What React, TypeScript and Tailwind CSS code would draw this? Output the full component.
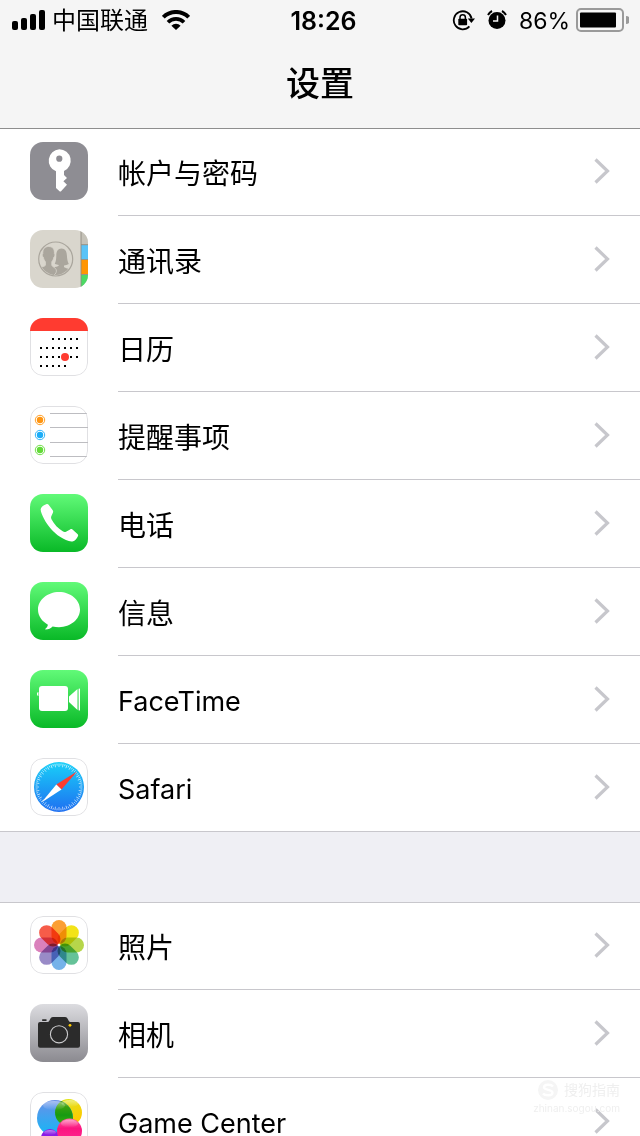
import type { ReactNode } from "react";

function Tile({ children, outlined = false }: { children: ReactNode; outlined?: boolean }) {
  return (
    <span className="relative block size-[58px] shrink-0 overflow-hidden rounded-[13px] bg-white">
      <svg viewBox="0 0 58 58" className="block size-full" aria-hidden="true">
        {outlined && (
          <rect x="0.5" y="0.5" width="57" height="57" rx="12.5" fill="none" stroke="#e0e0e3" />
        )}
        {children}
      </svg>
    </span>
  );
}

function KeyIcon() {
  return (
    <Tile>
      <rect width="58" height="58" fill="#8e8d93" />
      <path
        fill="#fff"
        fillRule="evenodd"
        d="M29.300 7.300a11.400 11.400 0 0 1 4.700 21.800V33l3 3-3.600 3.300 3.600 3.400-6.200 6.900h-1L26 46V29.300A11.400 11.400 0 0 1 29.300 7.300Zm0 6.300a3.100 3.100 0 1 0 0 6.200 3.100 3.100 0 0 0 0-6.200Z"
      />
    </Tile>
  );
}

function ContactsIcon() {
  return (
    <Tile>
      <rect width="58" height="58" fill="#d9d6cd" />
      <rect x="51" width="7" height="15" fill="#c5c2b8" />
      <rect x="51" y="15" width="7" height="14" fill="#5ac3f7" />
      <rect x="51" y="30" width="7" height="14" fill="#ff9502" />
      <rect x="51" y="45" width="7" height="13" fill="#4cd964" />
      <path d="M51 0v58M51 14.700h7M51 29.500h7M51 44.500h7" stroke="#8f8b80" strokeWidth="0.900" />
      <clipPath id="contacts-disc">
        <circle cx="25.700" cy="29" r="16" />
      </clipPath>
      <g clipPath="url(#contacts-disc)" fill="#aaa69d">
        <path d="M31.500 18.500c3.800 0 5.200 3 5.400 7 .2 3.500.7 6.500 1.900 8.600-1.500.9-3.300 1.200-4.800 1.300v1.500c1.200 1.200 5.500 1.600 8 4.100V50H20l4.800-8.500c-.1-2-.6-3-1.300-4.100 2-.6 4.200-1 5.300-2v-.4c-1.200-.1-2.800-.4-4-1.200 1.100-2 1.400-5 1.500-8.300.1-4 1.500-7 5.200-7Z" />
        <path
          stroke="#d9d6cd"
          strokeWidth="0.800"
          d="M18.700 16.500c4 0 6 2.800 5.700 7.200.9.200.6 3-.6 3.600-.4 2-1 3.400-2 4.400v3.600c.5 1.700 3.500 2 4.400 4.400.7 2-.4 4.300-2.600 5.800L18 52H0V40c3-2.800 14.500-2.500 15.400-4.700v-3.600c-1-1-1.600-2.400-2-4.400-1.200-.6-1.500-3.400-.6-3.600-.3-4.400 1.700-7.200 5.900-7.200Z"
        />
      </g>
      <circle cx="25.700" cy="29" r="17" fill="none" stroke="#aaa69d" strokeWidth="1.200" />
    </Tile>
  );
}

const calendarDots = [
  { y: 21, xs: [23, 29, 35, 41, 47] },
  { y: 30, xs: [11, 17, 23, 29, 35, 41, 47] },
  { y: 39, xs: [11, 17, 23, 29, 41, 47] },
  { y: 48, xs: [11, 17, 23, 29, 35] },
];

function CalendarIcon() {
  return (
    <Tile outlined>
      {calendarDots.map((row) =>
        row.xs.map((x) => (
          <rect key={`${x}-${row.y}`} x={x - 1} y={row.y - 1} width="2" height="2" fill="#000" />
        )),
      )}
      <circle cx="35" cy="39" r="4" fill="#ff3b30" />
      <path d="M0 0h58v13H0Z" fill="#ff3b30" />
    </Tile>
  );
}

function RemindersIcon() {
  const items = [
    { y: 14, color: "#ff9510" },
    { y: 29, color: "#1badf8" },
    { y: 44, color: "#63da38" },
  ];
  return (
    <Tile outlined>
      <path d="M20 7.500h38M20 21.500h38M20 36.500h38M20 50.500h38" stroke="#bdbdc1" />
      {items.map((item) => (
        <g key={item.y}>
          <circle cx="10" cy={item.y} r="4.700" fill="none" stroke={item.color} strokeWidth="0.900" />
          <circle cx="10" cy={item.y} r="3.200" fill={item.color} />
        </g>
      ))}
    </Tile>
  );
}

function GreenFill({ id }: { id: string }) {
  return (
    <>
      <linearGradient id={id} x1="0" y1="0" x2="0" y2="1">
        <stop offset="0" stopColor="#61fa78" />
        <stop offset="1" stopColor="#09b927" />
      </linearGradient>
      <rect width="58" height="58" fill={`url(#${id})`} />
    </>
  );
}

function PhoneIcon() {
  return (
    <Tile>
      <GreenFill id="phone-fill" />
      <path
        fill="#fff"
        d="M16.200 10.200c1.100-.5 1.900-.2 2.600.7l3.900 5.300c.6.900.6 1.600.2 2.500l-1.600 3.600c-.4 1.100-.3 2 .2 3 2.500 4.900 6.700 9.400 11.600 12.300 1 .6 1.900.6 2.900.1l4.100-2.300c.8-.5 1.600-.5 2.400.1l4.700 4.200c.9.700 1.200 1.600.7 2.600-1 2.100-2.400 4.200-4.700 4.900-3.500.9-8.500-1.200-13.200-4.400-6.100-4.200-12.400-11-16-18.100-1.800-3.600-3.600-7.500-3.300-9.700.4-2.100 3.300-4.100 5.500-4.800Z"
      />
    </Tile>
  );
}

function MessagesIcon() {
  return (
    <Tile>
      <GreenFill id="messages-fill" />
      <path
        fill="#fff"
        d="M29 10c11.700 0 21 7.900 21 17.600s-9.300 17.600-21 17.600c-2.200 0-4.400-.3-6.400-.8-1.700 1.700-4.200 3-6.900 3.200-.5 0-.6-.5-.3-.8 1.300-1 2.200-2.500 2.500-4.100C12 39.600 8 34.200 8 27.600 8 17.900 17.400 10 29 10Z"
      />
    </Tile>
  );
}

function FaceTimeIcon() {
  return (
    <Tile>
      <GreenFill id="facetime-fill" />
      <rect x="9" y="16" width="29" height="25" rx="3" fill="#fff" />
      <path d="M39 26.500l8.500-7.500v21L39 32Z" fill="#fff" />
      <rect x="48.600" y="18.500" width="1.400" height="22" rx="0.600" fill="#fff" />
      <path d="M8.400 22v4A1.500 1.500 0 0 1 7 24.500v-1A1.500 1.500 0 0 1 8.400 22Z" fill="#fff" />
    </Tile>
  );
}

function SafariIcon() {
  return (
    <Tile outlined>
      <linearGradient id="safari-fill" x1="0" y1="0" x2="0" y2="1">
        <stop offset="0" stopColor="#19d0f8" />
        <stop offset="1" stopColor="#1e6ff1" />
      </linearGradient>
      <circle cx="29" cy="29" r="25" fill="url(#safari-fill)" />
      {Array.from({ length: 72 }, (_, i) => (
        <path
          key={i}
          d={i % 2 ? "M29 5.500v2" : "M29 5.500v3.500"}
          stroke="#fff"
          strokeWidth="0.600"
          transform={`rotate(${i * 5} 29 29)`}
        />
      ))}
      <path d="M47 13.500 31.500 31.500 26.300 26.500Z" fill="#fc3c2f" />
      <path d="M11.500 44.500 26.300 26.500l5.200 5Z" fill="#fff" />
    </Tile>
  );
}

function PhotosIcon() {
  const petals = ["#fb9a28", "#f2e10c", "#b2d440", "#5dbf92", "#6eaee8", "#9385c4", "#d87ab8", "#f5533f"];
  return (
    <Tile outlined>
      <g className="isolate">
        {petals.map((color, i) => (
          <rect
            key={color}
            x="21.500"
            y="4"
            width="15"
            height="24"
            rx="7.500"
            fill={color}
            fillOpacity="0.950"
            transform={`rotate(${i * 45} 29 29)`}
            className="mix-blend-multiply"
          />
        ))}
      </g>
      <circle cx="29" cy="29" r="1.300" fill="#fff" />
    </Tile>
  );
}

function CameraIcon() {
  return (
    <Tile>
      <linearGradient id="camera-fill" x1="0" y1="0" x2="0" y2="1">
        <stop offset="0" stopColor="#dcdce0" />
        <stop offset="1" stopColor="#8b8a90" />
      </linearGradient>
      <rect width="58" height="58" fill="url(#camera-fill)" />
      <rect x="12" y="15.300" width="4.700" height="1.700" rx="0.700" fill="#2b2b2b" />
      <path
        fill="#2b2b2b"
        d="M10 18h7.500c1.300 0 1.600-.7 2.300-2.200.7-1.700 1.500-2.800 3.200-2.800h12c1.700 0 2.500 1.100 3.200 2.800.7 1.500 1 2.200 2.300 2.200H48a2 2 0 0 1 2 2v21.700a2 2 0 0 1-2 2H10a2 2 0 0 1-2-2V20a2 2 0 0 1 2-2Z"
      />
      <circle cx="29" cy="30.300" r="8.600" fill="none" stroke="#c9c9cb" strokeWidth="1.100" />
      <circle cx="40" cy="21.300" r="1.400" fill="#ffcc00" />
    </Tile>
  );
}

function GameCenterIcon() {
  return (
    <Tile outlined>
      <linearGradient id="gc-blue" x1="0" y1="0" x2="0" y2="1">
        <stop offset="0" stopColor="#6a8fe8" />
        <stop offset="1" stopColor="#12b8f6" />
      </linearGradient>
      <linearGradient id="gc-yellow" x1="0" y1="0" x2="0.500" y2="1">
        <stop offset="0" stopColor="#d9ea1f" />
        <stop offset="1" stopColor="#ffc800" />
      </linearGradient>
      <linearGradient id="gc-green" x1="0" y1="0" x2="0" y2="1">
        <stop offset="0" stopColor="#5aa80c" />
        <stop offset="0.600" stopColor="#179a12" />
        <stop offset="1" stopColor="#3fb60a" />
      </linearGradient>
      <linearGradient id="gc-pink" x1="0" y1="0" x2="0" y2="1">
        <stop offset="0" stopColor="#ff5fa2" />
        <stop offset="0.400" stopColor="#fb1580" />
        <stop offset="1" stopColor="#ff2d95" />
      </linearGradient>
      <linearGradient id="gc-shine" x1="0" y1="0" x2="0" y2="1">
        <stop offset="0" stopColor="#fff" stopOpacity="0.450" />
        <stop offset="1" stopColor="#fff" stopOpacity="0" />
      </linearGradient>
      <clipPath id="gc-blue-clip">
        <circle cx="25" cy="26" r="18" />
      </clipPath>
      <circle cx="38.500" cy="20.500" r="13.500" fill="url(#gc-yellow)" />
      <circle cx="25" cy="26" r="18" fill="url(#gc-blue)" />
      <circle cx="38.500" cy="20.500" r="13.500" fill="url(#gc-green)" clipPath="url(#gc-blue-clip)" />
      <circle cx="20" cy="46" r="9" fill="#8a1be6" />
      <ellipse cx="20" cy="40.500" rx="6" ry="2.500" fill="url(#gc-shine)" />
      <circle cx="39.500" cy="39" r="12.500" fill="url(#gc-pink)" />
      <ellipse cx="24" cy="13.500" rx="11" ry="4.500" fill="url(#gc-shine)" />
      <ellipse cx="40" cy="11.500" rx="8.500" ry="3.500" fill="url(#gc-shine)" />
      <ellipse cx="39.500" cy="31.500" rx="8.500" ry="4" fill="url(#gc-shine)" />
    </Tile>
  );
}

function Chevron() {
  return (
    <svg viewBox="0 0 16 26" className="h-[26px] w-4 shrink-0" fill="none" aria-hidden="true">
      <path d="M1.500 1.500 13.500 13 1.500 24.500" stroke="#c7c7cc" strokeWidth="3.200" />
    </svg>
  );
}

type Item = { label: string; icon: ReactNode; latin?: boolean };

function Row({ item, last }: { item: Item; last: boolean }) {
  return (
    <li>
      <a
        href="#"
        className={`flex h-22 items-stretch pl-[30px] ${last ? "border-b border-[#c8c7cc]" : ""}`}
      >
        <span className="pt-3.5">{item.icon}</span>
        <span
          className={`ml-[30px] flex flex-1 items-center justify-between pr-[30px] pb-0.5 ${
            last ? "" : "border-b border-[#c8c7cc]"
          }`}
        >
          <span className={`pt-1.5 leading-6 ${item.latin ? "text-[27px]" : "text-[28px]"}`}>
            {item.label}
          </span>
          <Chevron />
        </span>
      </a>
    </li>
  );
}

function Group({ items }: { items: Item[] }) {
  return (
    <ul className="bg-white shadow-[inset_0_1px_0_#c8c7cc]">
      {items.map((item, i) => (
        <Row key={item.label} item={item} last={i === items.length - 1} />
      ))}
    </ul>
  );
}

function StatusBar() {
  return (
    <div className="grid h-10 grid-cols-[1fr_auto_1fr] items-center pr-[11px] pl-3 text-2xl leading-8">
      <div className="flex items-center">
        <svg viewBox="0 0 34 20" className="h-5 w-[34px]" aria-hidden="true">
          <rect x="0" y="11" width="6" height="9" rx="2" />
          <rect x="9" y="8" width="6" height="12" rx="2" />
          <rect x="18" y="4" width="6" height="16" rx="2" />
          <rect x="27" y="0" width="6" height="20" rx="2" />
        </svg>
        <span className="ml-1.5 pt-0.5">中国联通</span>
        <svg viewBox="0 0 28 20" className="ml-3.5 h-5 w-7" aria-hidden="true">
          <path d="M1.300 7.200a18 18 0 0 1 25.400 0" fill="none" stroke="#000" strokeWidth="4" />
          <path d="M6 12.300a11 11 0 0 1 16 0" fill="none" stroke="#000" strokeWidth="3.600" />
          <path d="M14 20l-4.600-4.200a6.300 6.300 0 0 1 9.200 0Z" />
        </svg>
      </div>
      <span className="pt-0.5 pl-1.5 text-[25px] font-semibold">18:26</span>
      <div className="flex items-center justify-end">
        <svg viewBox="0 0 23 22" className="h-[22px] w-[23px]" aria-hidden="true">
          <path
            d="M17.400 17.400A9 9 0 1 1 19.600 9.500"
            fill="none"
            stroke="#000"
            strokeWidth="1.800"
          />
          <path d="M15.800 9.500H23l-3.600 4.500Z" />
          <rect x="6.300" y="9.800" width="8.800" height="6.400" rx="0.800" />
          <path d="M8 10V8.400a2.700 2.700 0 0 1 5.400 0V10" fill="none" stroke="#000" strokeWidth="1.500" />
        </svg>
        <svg viewBox="0 0 20 20" className="ml-3 size-5" aria-hidden="true">
          <circle cx="10" cy="10.500" r="8.500" />
          <path d="M10.500 5.500v5.500H6" fill="none" stroke="#f5f5f5" strokeWidth="1.500" />
          <path d="M1 5A10 10 0 0 1 5 1M15 1a10 10 0 0 1 4 4" fill="none" stroke="#000" strokeWidth="2" />
        </svg>
        <span className="ml-3 pt-0.5 text-[23px]">86%</span>
        <svg viewBox="0 0 53 24" className="ml-1.5 h-6 w-[53px]" aria-hidden="true">
          <rect x="1" y="1" width="46" height="22" rx="4" fill="none" stroke="#9a9a9a" strokeWidth="2" />
          <rect x="4" y="4.500" width="36" height="15" rx="1" />
          <path d="M50 8a4 4 0 0 1 0 8Z" fill="#9a9a9a" />
        </svg>
      </div>
    </div>
  );
}

function Watermark() {
  return (
    <div
      className="pointer-events-none absolute right-5 bottom-5 flex flex-col items-end text-[#efefef]"
      aria-hidden="true"
    >
      <div className="flex items-center gap-1.5 text-sm leading-5">
        <svg viewBox="0 0 20 20" className="size-5">
          <circle cx="10" cy="10" r="10" fill="#f5f5f5" />
          <path
            d="M15 6.500C13 4 6 4 6 7.300s8.500 2 8.500 5.400S7 16 5 13.500"
            fill="none"
            stroke="#fff"
            strokeWidth="2.400"
          />
        </svg>
        搜狗指南
      </div>
      <div className="text-[10px] leading-4">zhinan.sogou.com</div>
    </div>
  );
}

const accountItems: Item[] = [
  { label: "帐户与密码", icon: <KeyIcon /> },
  { label: "通讯录", icon: <ContactsIcon /> },
  { label: "日历", icon: <CalendarIcon /> },
  { label: "提醒事项", icon: <RemindersIcon /> },
  { label: "电话", icon: <PhoneIcon /> },
  { label: "信息", icon: <MessagesIcon /> },
  { label: "FaceTime", icon: <FaceTimeIcon />, latin: true },
  { label: "Safari", icon: <SafariIcon />, latin: true },
];

const mediaItems: Item[] = [
  { label: "照片", icon: <PhotosIcon /> },
  { label: "相机", icon: <CameraIcon /> },
  { label: "Game Center", icon: <GameCenterIcon />, latin: true },
];

export default function App() {
  return (
    <div className="relative flex h-screen flex-col overflow-hidden bg-[#efeff4] font-['Inter','Noto_Sans_CJK_SC',sans-serif] text-black">
      <header className="relative h-32 shrink-0 bg-[#f5f5f5] shadow-[0_1px_0_#8e8e8e]">
        <StatusBar />
        <h1 className="pt-5 text-center text-[34px] leading-12 font-medium">设置</h1>
      </header>
      <main className="flex min-h-0 flex-1 flex-col gap-[70px] overflow-y-auto [scrollbar-width:none]">
        <Group items={accountItems} />
        <Group items={mediaItems} />
      </main>
      <Watermark />
    </div>
  );
}
